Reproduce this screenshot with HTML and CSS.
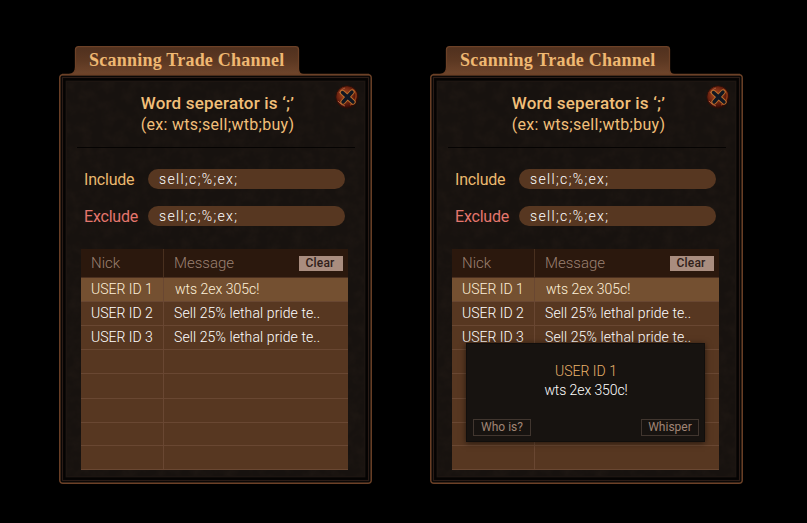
FILE: index.html
```html
<!DOCTYPE html>
<html lang="en">
<head>
<meta charset="utf-8">
<title>Scanning Trade Channel</title>
<link rel="stylesheet" href="styles.css">
</head>
<body>
<svg class="defs" width="0" height="0" aria-hidden="true">
  <defs>
    <linearGradient id="tabFill" gradientUnits="userSpaceOnUse" x1="0" y1="0" x2="0" y2="29">
      <stop offset="0" stop-color="#4f301e"/><stop offset=".5" stop-color="#5c3822"/><stop offset="1" stop-color="#70462c"/>
    </linearGradient>
    <radialGradient id="orb" cx=".42" cy=".4" r=".62">
      <stop offset="0" stop-color="#a94d22"/><stop offset=".5" stop-color="#752711"/><stop offset=".8" stop-color="#4a1209"/><stop offset="1" stop-color="#220b07"/>
    </radialGradient>
    <filter id="grain" x="0" y="0" width="100%" height="100%">
      <feTurbulence type="fractalNoise" baseFrequency=".09" numOctaves="4" seed="4"/>
      <feColorMatrix values="0 0 0 0 .17  0 0 0 0 .09  0 0 0 0 .05  1.4 0 0 0 -.5"/>
    </filter>
    <symbol id="frame" viewBox="0 0 313 438">
      <path d="M.7 32Q.7 28.6 4 28.6H10Q16.500 28 16.500 21V3.500Q16.500 .7 19.500 .7H236.500Q239.500 .7 239.500 3.500V23Q239.500 28.600 245 28.600H309Q312.300 28.600 312.300 32V434Q312.300 437.300 309 437.300H4Q.7 437.300 .7 434Z" fill="url(#tabFill)" stroke="#6c4127" stroke-width="1.300"/>
      <rect x="1.500" y="29.500" width="310" height="407" rx="2" fill="#090706"/>
      <rect x="3.500" y="31.500" width="306" height="403" fill="none" stroke="#2b1c16"/>
      <rect x="5.500" y="33.500" width="302" height="399" fill="#17120f" stroke="#050302" stroke-width="2"/>
      <rect x="7.500" y="35.500" width="298" height="395" fill="none" stroke="#1d1511"/>
      <rect x="8" y="36" width="297" height="394" filter="url(#grain)" opacity=".09"/>
      <path d="M3 28.600H310" stroke="#6c4127" stroke-width="1.500"/>
      <path d="M18 101.500H296" stroke="#050302"/>
    </symbol>
    <symbol id="close" viewBox="0 0 24 24">
      <circle cx="12" cy="12" r="11.300" fill="url(#orb)" stroke="#25100a"/>
      <path d="M4 8Q6 4 10 3M3 16Q6 20 10 21" fill="none" stroke="#a85c3c" stroke-width="1"/>
      <path d="M17 4Q22 7 21 12Q20 18 15 20" fill="none" stroke="#8d3915" stroke-width="1.500"/>
      <path d="M7.500 7.500L18 17M17 7L8 17" stroke="#ba6d2c" stroke-width="5.400" stroke-linecap="round"/>
      <path d="M7.500 7.500L18 17M17 7L8 17" stroke="#101722" stroke-width="3.400" stroke-linecap="round"/>
    </symbol>
  </defs>
</svg>
<main class="stage">
  <section class="panel">
    <svg class="frame"><use href="#frame"/></svg>
    <h1 class="tab"><span>Scanning Trade Channel</span></h1>
    <svg class="close"><use href="#close"/></svg>
    <header class="hint"><strong>Word seperator is ‘;’</strong><span>(ex: wts;sell;wtb;buy)</span></header>
    <div class="filters">
      <div class="filter"><span class="label">Include</span><div class="field"><span>sell;c;%;ex;</span></div></div>
      <div class="filter"><span class="label exclude">Exclude</span><div class="field"><span>sell;c;%;ex;</span></div></div>
    </div>
    <div class="table">
      <div class="row head"><span class="cell">Nick</span><span class="cell">Message</span><button class="clear">Clear</button></div>
      <div class="row selected"><span class="cell"><span class="nick">USER ID 1</span></span><span class="cell"><span class="wts">wts 2ex 305c!</span></span></div>
      <div class="row"><span class="cell"><span class="nick">USER ID 2</span></span><span class="cell"><span class="sell">Sell 25% lethal pride te..</span></span></div>
      <div class="row"><span class="cell"><span class="nick">USER ID 3</span></span><span class="cell"><span class="sell">Sell 25% lethal pride te..</span></span></div>
      <div class="row"><span class="cell"></span></div><div class="row"><span class="cell"></span></div><div class="row"><span class="cell"></span></div><div class="row"><span class="cell"></span></div><div class="row"><span class="cell"></span></div>
    </div>
  </section>
  <section class="panel">
    <svg class="frame"><use href="#frame"/></svg>
    <h1 class="tab"><span>Scanning Trade Channel</span></h1>
    <svg class="close"><use href="#close"/></svg>
    <header class="hint"><strong>Word seperator is ‘;’</strong><span>(ex: wts;sell;wtb;buy)</span></header>
    <div class="filters">
      <div class="filter"><span class="label">Include</span><div class="field"><span>sell;c;%;ex;</span></div></div>
      <div class="filter"><span class="label exclude">Exclude</span><div class="field"><span>sell;c;%;ex;</span></div></div>
    </div>
    <div class="table">
      <div class="row head"><span class="cell">Nick</span><span class="cell">Message</span><button class="clear">Clear</button></div>
      <div class="row selected"><span class="cell"><span class="nick">USER ID 1</span></span><span class="cell"><span class="wts">wts 2ex 305c!</span></span></div>
      <div class="row"><span class="cell"><span class="nick">USER ID 2</span></span><span class="cell"><span class="sell">Sell 25% lethal pride te..</span></span></div>
      <div class="row"><span class="cell"><span class="nick">USER ID 3</span></span><span class="cell"><span class="sell">Sell 25% lethal pride te..</span></span></div>
      <div class="row"><span class="cell"></span></div><div class="row"><span class="cell"></span></div><div class="row"><span class="cell"></span></div><div class="row"><span class="cell"></span></div><div class="row"><span class="cell"></span></div>
    </div>
    <aside class="popup">
      <span class="popup-user">USER ID 1</span>
      <span class="popup-message">wts 2ex 350c!</span>
      <div class="actions"><button>Who is?</button><button>Whisper</button></div>
    </aside>
  </section>
</main>
</body>
</html>
```
FILE: styles.css
```css
* { box-sizing: border-box; }
body { margin: 0; background: #000; font-family: Roboto, "Liberation Sans", sans-serif; }
.defs { position: absolute; }
.stage { display: flex; gap: 58px; width: 807px; height: 523px; padding: 46px 0 0 59px; overflow: hidden; }
.panel { position: relative; width: 313px; height: 438px; flex: none; }
.panel > * { position: relative; }
.panel > .frame { position: absolute; left: 0; top: 0; width: 313px; height: 438px; }
.panel > .close { position: absolute; left: 276px; top: 39px; width: 24px; height: 24px; }
.tab { margin: 0; height: 29px; padding-left: 30px; font: bold 18px/29px "Liberation Serif", serif; letter-spacing: .23px; color: #efb872; white-space: nowrap; }
.hint { height: 73px; padding: 17px 0 0 4px; display: flex; flex-direction: column; align-items: center; color: #f1bf79; white-space: nowrap; }
.hint strong { font-size: 17px; line-height: 22px; font-weight: 500; letter-spacing: .18px; }
.hint span { font-size: 16px; line-height: 21px; letter-spacing: .3px; }
.filters { display: flex; flex-direction: column; gap: 17px; height: 101px; padding: 21px 27px 0 25px; }
.filter { display: flex; justify-content: space-between; height: 20px; align-items: center; }
.label { color: #eab86e; font-size: 16px; letter-spacing: -.2px; }
.exclude { color: #e4766d; }
.field { width: 197px; height: 20px; padding-left: 11px; border-radius: 10px; background: #573721; color: #fff; font-size: 14px; font-weight: 300; line-height: 20px; letter-spacing: 1.35px; }
.table { width: 267px; height: 221px; margin-left: 22px; display: grid; grid-template-rows: 29px 24px 24px 24px 24px 25px 24px 23px 24px; background: #573721; }
.row { position: relative; display: grid; grid-template-columns: 83px 1fr; border-bottom: 1px solid #694732; color: #fff; font-size: 14px; font-weight: 300; line-height: 23px; white-space: nowrap; }
.cell { padding-left: 10px; overflow: hidden; }
.cell:first-child { border-right: 1px solid #694732; }
.wts { margin-left: 1px; }
.sell { letter-spacing: .1px; }
.head { background: #2b180d; color: #9b8071; font-size: 15px; line-height: 28px; font-weight: 300; border-color: #4b3020; }
.head .cell:first-child { border-color: #49301f; }
.selected { background: #745031; color: #fff1d9; }
.clear { position: absolute; left: 218px; top: 7px; width: 44px; height: 15px; padding: 0 2px 0 0; border: 0; background: #a98d7f; color: #302019; font: 500 12px/15px Roboto, sans-serif; letter-spacing: .2px; }
.panel > .popup { position: absolute; left: 36px; top: 297px; width: 239px; height: 99px; padding: 18px 5px 5px 6px; display: flex; flex-direction: column; align-items: center; background: #171310; border: 1px solid #110e0c; box-shadow: 0 1px 6px #0009; color: #fff; font-size: 14px; font-weight: 300; line-height: 19px; white-space: nowrap; }
.popup-user { color: #e9b26b; }
.popup-message { letter-spacing: -.1px; }
.actions { width: 100%; display: flex; justify-content: space-between; margin-top: auto; }
.actions button { width: 58px; height: 17px; padding: 0; border: 1px solid #41362f; background: none; color: #a08575; font: 12px/15px Roboto, sans-serif; }
```
